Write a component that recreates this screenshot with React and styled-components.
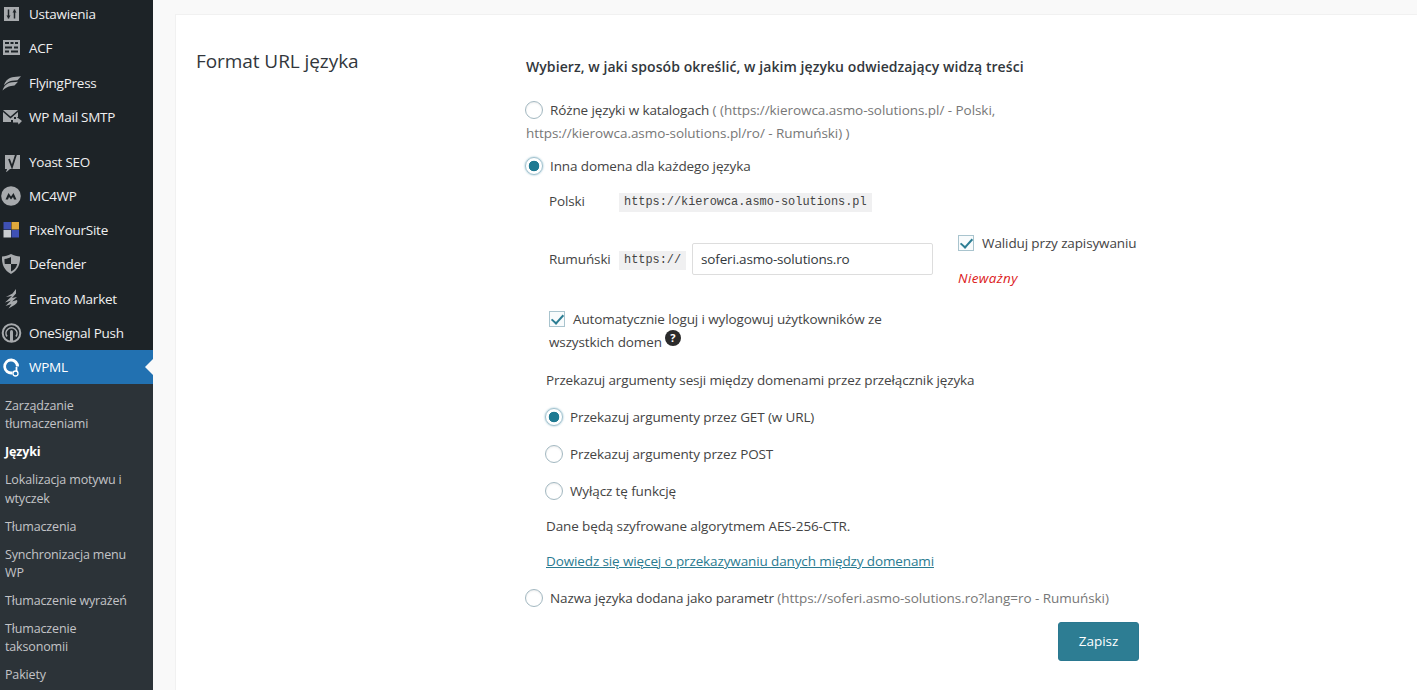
import React from 'react';
import styled, { createGlobalStyle } from 'styled-components';

const GlobalStyle = createGlobalStyle`
  html, body {
    margin: 0;
    padding: 0;
    overflow: hidden;
    background: #f9f9f9;
  }
  body {
    font-family: "Open Sans", "Liberation Sans", sans-serif;
    font-size: 13px;
    color: #3c434a;
  }
`;

const Page = styled.div`
  display: flex;
  width: 1417px;
  height: 690px;
  overflow: hidden;
`;

const Sidebar = styled.nav`
  flex: 0 0 153px;
  height: 690px;
  overflow: hidden;
  background: #1d2327;
`;

const MenuList = styled.div`
  display: flex;
  flex-direction: column;
  margin-top: -3.1px;
`;

const MenuItem = styled.div`
  position: relative;
  display: flex;
  align-items: center;
  height: 34.3px;
  margin-bottom: ${p => (p.$gap ? '10.3px' : '0')};
  padding-left: 1px;
  background: ${p => (p.$active ? '#2271b1' : 'transparent')};
  color: ${p => (p.$active ? '#fff' : '#f0f0f1')};
  font-size: 13.5px;
  letter-spacing: -0.25px;

  ${p =>
    p.$active &&
    `&::after {
      content: '';
      position: absolute;
      right: 0;
      top: 50%;
      margin-top: -8px;
      border: 8px solid transparent;
      border-right-color: #f9f9f9;
      border-left-width: 0;
    }`}
`;

const MenuIcon = styled.svg`
  flex: 0 0 22px;
  width: 22px;
  height: 20px;
  margin-right: 6px;
`;

const SubMenu = styled.div`
  display: flex;
  flex-direction: column;
  gap: 9.6px;
  padding: 12.3px 0 20px;
  background: #2c3338;
`;

const SubItem = styled.div`
  padding-left: 5px;
  color: ${p => (p.$current ? '#fff' : '#c3c4c7')};
  font-size: 12.5px;
  font-weight: ${p => (p.$current ? 700 : 400)};
  line-height: 18.4px;
  letter-spacing: -0.15px;
`;

const Main = styled.main`
  flex: 1;
  padding: 14px 0 0 22px;
  min-width: 0;
`;

const Card = styled.section`
  display: flex;
  height: 700px;
  background: #fff;
  border: 1px solid #f1f1f1;
  border-right: 0;
`;

const SectionTitle = styled.h2`
  flex: 0 0 330px;
  margin: 32px 0 0 20px;
  font-size: 19px;
  font-weight: 400;
  line-height: 28px;
  letter-spacing: -0.07px;
  color: #32373c;
`;

const Form = styled.div`
  flex: 0 0 613px;
  display: flex;
  flex-direction: column;
  padding-top: 42px;
  font-size: 13.5px;
  line-height: 23px;
  letter-spacing: -0.12px;
  color: #444;
`;

const Lead = styled.div`
  font-size: 14px;
  font-weight: 600;
  line-height: 20px;
  letter-spacing: 0.07px;
  color: #32373c;
`;

const Option = styled.label`
  display: block;
  margin-top: ${p => p.$top}px;
  height: ${p => (p.$tall ? 46 : 23)}px;
`;

const Muted = styled.span`
  color: #777;
  letter-spacing: -0.05px;
`;

const Radio = styled.input.attrs({ type: 'radio' })`
  appearance: none;
  box-sizing: border-box;
  display: inline-block;
  width: 18px;
  height: 18px;
  margin: 0 7px 0 ${p => p.$left || 0}px;
  vertical-align: -4px;
  border: 1px solid #a3b8c1;
  border-radius: 50%;
  background: #fff;
  box-shadow: inset 0 1px 2px rgba(0, 0, 0, 0.08);

  &:checked {
    background: radial-gradient(circle, #1f7a92 0 5px, #fff 5.6px);
    border-color: #9fc0cd;
    box-shadow: 0 0 2px rgba(30, 120, 150, 0.6);
  }
`;

const Check = styled.input.attrs({ type: 'checkbox' })`
  appearance: none;
  position: relative;
  box-sizing: border-box;
  display: inline-block;
  width: 16px;
  height: 16px;
  margin: 0;
  vertical-align: -3px;
  border: 1px solid #a9c4ce;
  background: #f8fbfc;

  &:checked::before {
    content: '';
    position: absolute;
    left: 4px;
    top: 0;
    width: 5px;
    height: 10px;
    border: solid #2b7d93;
    border-width: 0 2px 2px 0;
    transform: rotate(42deg);
  }
`;

const IndentRow = styled.div`
  display: flex;
  align-items: center;
  margin-top: ${p => p.$top}px;
  margin-left: 23px;
  height: ${p => p.$height}px;
`;

const FieldLabel = styled.span`
  flex: 0 0 70px;
`;

const Code = styled.code`
  margin-top: 2px;
  padding: 0 5px;
  background: #f0f0f1;
  font-family: "Liberation Mono", monospace;
  font-size: 11.9px;
  line-height: 19px;
  letter-spacing: 0;
  color: #444;
`;

const DomainRow = styled.div`
  display: flex;
  align-items: flex-start;
  height: 54px;
  margin-top: 23px;
  margin-left: 23px;
`;

const DomainField = styled.div`
  display: flex;
  align-items: center;
  height: 32px;
  margin-top: 8px;
`;

const DomainInput = styled.input`
  box-sizing: border-box;
  width: 241px;
  height: 32px;
  margin-left: 6px;
  padding: 0 8px;
  border: 1px solid #ddd;
  border-radius: 2px;
  font: inherit;
  font-size: 13.5px;
  letter-spacing: -0.17px;
  color: #32373c;
  outline: none;
`;

const Validate = styled.div`
  margin-left: 25px;
`;

const CheckLabel = styled.label`
  display: block;
  height: 16px;
  line-height: 16px;
`;

const CheckText = styled.span`
  margin-left: 8px;
`;

const Invalid = styled.div`
  margin-top: 16px;
  color: #dc1a1a;
  font-style: italic;
  line-height: 22px;
  letter-spacing: 0.35px;
`;

const AutoLogin = styled.div`
  height: 46px;
  margin-top: 19px;
  margin-left: 23px;
  width: 370px;
`;

const HelpIcon = styled.span`
  display: inline-block;
  width: 16px;
  height: 16px;
  margin: -8px 0 0 3px;
  border-radius: 50%;
  background: #2b2b2b;
  color: #fff;
  font-size: 11px;
  font-weight: 700;
  line-height: 16px;
  letter-spacing: 0;
  text-align: center;
  vertical-align: 5px;
`;

const Note = styled.div`
  margin-top: ${p => p.$top}px;
  margin-left: 20px;
`;

const SubOption = styled.label`
  display: block;
  margin-top: ${p => p.$top}px;
  margin-left: 19px;
  height: 23px;
`;

const DocLink = styled.a`
  color: #2a7b91;
  text-decoration: underline;
`;

const Actions = styled.div`
  display: flex;
  justify-content: flex-end;
  margin-top: 12px;
`;

const SaveButton = styled.button`
  width: 81px;
  height: 39px;
  border: 1px solid #2a7890;
  border-radius: 3px;
  background: #2d7d93;
  color: #fff;
  font: inherit;
  font-size: 13.5px;
  font-weight: 500;
`;

const fg = '#a7aaad';
const bg = '#1d2327';

const icons = {
  settings: (
    <>
      <rect x="3" y="3" width="15" height="14" fill={fg} />
      <path d="M7.500 5.500v9M13.500 5.500v9" stroke={bg} strokeWidth="1.500" />
      <path d="M5.500 11.500l2 3 2-3zM11.500 8.500l2-3 2 3z" fill={bg} />
    </>
  ),
  acf: (
    <>
      <rect x="2" y="2" width="17" height="15" fill={fg} />
      <path d="M4 5h4M9.500 5h3M14 5h3M4 9.500h7M13 9.500h4M4 13.500h4M10 13.500h7" stroke={bg} strokeWidth="2" />
    </>
  ),
  flying: (
    <>
      <path d="M3 12.500C4.500 7 8 4.500 13 4l7-.8-3.500 4-5.500.6C8 8.200 6 9.500 3 12.500z" fill={fg} />
      <path d="M1.500 17.500C3 12.500 6.500 9.800 11 9.300l6-.5-3.500 3.800-3.500.4c-3 .5-5.500 2-8.500 4.500z" fill={fg} />
    </>
  ),
  mail: (
    <>
      <path d="M2 3h15l-7.500 6.500z" fill={fg} />
      <path d="M2 5l7.500 6.500L17 5v5h-4v3h-3v2H2z" fill={fg} />
      <path d="M12 12h3V9.500l6 4.500-3.500 3.500-.5-2h-5z" fill={fg} />
    </>
  ),
  yoast: (
    <>
      <path d="M4 3h15v14H9l-4 3.500L6 17H4z" fill={fg} />
      <path d="M8 7l3 8 4.500-14" fill="none" stroke={bg} strokeWidth="1.800" />
    </>
  ),
  mc4wp: (
    <>
      <circle cx="10" cy="10" r="9.800" fill={fg} />
      <path d="M4.500 13.500l3-6.500 2.500 3.500 2.500-3.500 3 6.500h-2.500l-1-2.500-2 2.500-2-2.500-1 2.500z" fill={bg} />
    </>
  ),
  pixel: (
    <>
      <rect x="2.500" y="2" width="7.500" height="7.500" fill="#3f51b5" />
      <rect x="10.500" y="2" width="7.500" height="7.500" fill="#e0a83c" />
      <rect x="2.500" y="10" width="7.500" height="7.500" fill="#c9ccd0" />
      <rect x="10.500" y="10" width="7.500" height="7.500" fill="#3f51b5" />
    </>
  ),
  defender: (
    <>
      <path d="M10 0c3 1.500 6 2.200 9 2.500.5 8-2.500 14-9 17.500C3.500 16.500.5 10.500 1 2.500 4 2.200 7 1.500 10 0z" fill={fg} />
      <path d="M10 3v7h6.200c-.7 3.500-3 6-6.200 7.500V10H3.800C3.500 8.500 3.400 6.800 3.500 5 6 4.700 8 4 10 3z" fill={bg} />
    </>
  ),
  envato: (
    <path d="M15 0l-3.500 4.500L5 8l6-1-7 6.500 6-2L4.500 17l6-2-3 4.500 6-3.500c2.500-1.500 3.500-3.500 2.500-5l-5 1.500 5-4.500-5 1 4-4.500z" fill={fg} />
  ),
  onesignal: (
    <>
      <circle cx="10.500" cy="10" r="8.800" fill="none" stroke={fg} strokeWidth="2" />
      <path d="M6 13.500a5.500 5.500 0 1 1 9 0" fill="none" stroke={fg} strokeWidth="1.600" />
      <rect x="9" y="7" width="3" height="12" rx="1.500" fill={fg} />
    </>
  ),
  wpml: (
    <>
      <path d="M10.500 1.500a8 8 0 1 0 1 15.900V14.300a5 5 0 1 1 3.500-4.800h3A8 8 0 0 0 10.500 1.500z" fill="#fff" />
      <circle cx="14.500" cy="16.500" r="2.500" fill="none" stroke="#fff" strokeWidth="1.300" />
      <path d="M15.500 10v4.500" stroke="#fff" strokeWidth="1.800" />
    </>
  ),
};

const menu = [
  { key: 'settings', label: 'Ustawienia' },
  { key: 'acf', label: 'ACF' },
  { key: 'flying', label: 'FlyingPress' },
  { key: 'mail', label: 'WP Mail SMTP', gap: true },
  { key: 'yoast', label: 'Yoast SEO' },
  { key: 'mc4wp', label: 'MC4WP' },
  { key: 'pixel', label: 'PixelYourSite' },
  { key: 'defender', label: 'Defender' },
  { key: 'envato', label: 'Envato Market' },
  { key: 'onesignal', label: 'OneSignal Push' },
  { key: 'wpml', label: 'WPML', active: true },
];

const submenu = [
  ['Zarządzanie', 'tłumaczeniami'],
  ['Języki'],
  ['Lokalizacja motywu i', 'wtyczek'],
  ['Tłumaczenia'],
  ['Synchronizacja menu', 'WP'],
  ['Tłumaczenie wyrażeń'],
  ['Tłumaczenie', 'taksonomii'],
  ['Pakiety'],
];

const App = () => (
  <Page>
    <GlobalStyle />
    <Sidebar>
      <MenuList>
        {menu.map(item => (
          <MenuItem key={item.key} $active={item.active} $gap={item.gap}>
            <MenuIcon viewBox="0 0 22 20">{icons[item.key]}</MenuIcon>
            {item.label}
          </MenuItem>
        ))}
      </MenuList>
      <SubMenu>
        {submenu.map(lines => (
          <SubItem key={lines[0]} $current={lines[0] === 'Języki'}>
            {lines.map((line, i) => (
              <React.Fragment key={line}>
                {i > 0 && <br />}
                {line}
              </React.Fragment>
            ))}
          </SubItem>
        ))}
      </SubMenu>
    </Sidebar>
    <Main>
      <Card>
        <SectionTitle>Format URL języka</SectionTitle>
        <Form>
          <Lead>Wybierz, w jaki sposób określić, w jakim języku odwiedzający widzą treści</Lead>
          <Option $top={22} $tall>
            <Radio name="format" $left={-1} />
            Różne języki w katalogach <Muted>( (https://kierowca.asmo-solutions.pl/ - Polski,</Muted>
            <br />
            <Muted>https://kierowca.asmo-solutions.pl/ro/ - Rumuński) )</Muted>
          </Option>
          <Option $top={10}>
            <Radio name="format" $left={-1} defaultChecked />
            Inna domena dla każdego języka
          </Option>
          <IndentRow $top={13} $height={21}>
            <FieldLabel>Polski</FieldLabel>
            <Code>https://kierowca.asmo-solutions.pl</Code>
          </IndentRow>
          <DomainRow>
            <DomainField>
              <FieldLabel>Rumuński</FieldLabel>
              <Code>https://</Code>
              <DomainInput defaultValue="soferi.asmo-solutions.ro" />
            </DomainField>
            <Validate>
              <CheckLabel>
                <Check defaultChecked />
                <CheckText>Waliduj przy zapisywaniu</CheckText>
              </CheckLabel>
              <Invalid>Nieważny</Invalid>
            </Validate>
          </DomainRow>
          <AutoLogin>
            <Check defaultChecked />
            <CheckText>Automatycznie loguj i wylogowuj użytkowników ze</CheckText>
            <br />
            wszystkich domen
            <HelpIcon>?</HelpIcon>
          </AutoLogin>
          <Note $top={15}>Przekazuj argumenty sesji między domenami przez przełącznik języka</Note>
          <SubOption $top={14}>
            <Radio name="session" defaultChecked />
            Przekazuj argumenty przez GET (w URL)
          </SubOption>
          <SubOption $top={14}>
            <Radio name="session" />
            Przekazuj argumenty przez POST
          </SubOption>
          <SubOption $top={14}>
            <Radio name="session" />
            Wyłącz tę funkcję
          </SubOption>
          <Note $top={12}>Dane będą szyfrowane algorytmem AES-256-CTR.</Note>
          <Note $top={12}>
            <DocLink href="#docs">Dowiedz się więcej o przekazywaniu danych między domenami</DocLink>
          </Note>
          <Option $top={14}>
            <Radio name="format" $left={-1} />
            Nazwa języka dodana jako parametr <Muted>(https://soferi.asmo-solutions.ro?lang=ro - Rumuński)</Muted>
          </Option>
          <Actions>
            <SaveButton>Zapisz</SaveButton>
          </Actions>
        </Form>
      </Card>
    </Main>
  </Page>
);

export default App;
